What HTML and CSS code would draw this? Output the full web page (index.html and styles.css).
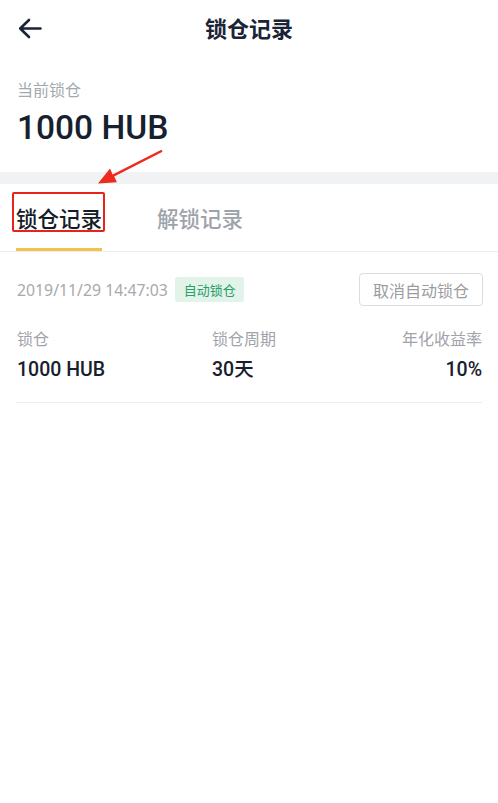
FILE: index.html
```html
<!DOCTYPE html>
<html lang="zh-CN">
<head>
<meta charset="utf-8">
<title>锁仓记录</title>
<link rel="stylesheet" href="styles.css">
</head>
<body>
<div class="page">
  <header class="header">
    <div class="back">
      <svg width="24" height="24" viewBox="0 0 24 24" class="back-icon">
        <path d="M22.5 10.5 H2.5 M11 2 L2.2 10.5 L11 19" fill="none" stroke="#1b2336" stroke-width="2.6" stroke-linecap="round" stroke-linejoin="round"/>
      </svg>
    </div>
    <h1 class="title">锁仓记录</h1>
    <div></div>
  </header>

  <section class="summary">
    <div class="summary-label">当前锁仓</div>
    <div class="summary-value">1000 HUB</div>
  </section>

  <div class="band"></div>

  <nav class="tabs">
    <div class="tab active">锁仓记录<span class="mark-box"></span></div>
    <div class="tab">解锁记录</div>
  </nav>

  <div class="record">
    <div class="record-top">
      <div class="record-meta">
        <span class="date">2019/11/29 14:47:03</span>
        <span class="tag">自动锁仓</span>
      </div>
      <button class="btn">取消自动锁仓</button>
    </div>
    <div class="record-grid">
      <div class="label">锁仓</div>
      <div class="label">锁仓周期</div>
      <div class="label right">年化收益率</div>
      <div class="value">1000 HUB</div>
      <div class="value">30天</div>
      <div class="value right">10%</div>
    </div>
  </div>

  <svg class="annot" width="498" height="200" viewBox="0 0 498 200">
    <polygon points="162.6,151.8 114.2,176.6 116.9,182.3 98,183.5 110,168.4 112.6,174.4 161.4,149.8" fill="#ee2a1c"/>
  </svg>
</div>
</body>
</html>
```

FILE: styles.css
```css
* { box-sizing: border-box; }
html, body { margin: 0; padding: 0; background: #fff; }
body {
  font-family: "Noto Sans", "Noto Sans CJK SC", sans-serif;
  color: #1b2336;
  width: 498px;
}
.page { position: relative; }

.header {
  height: 54px;
  display: grid;
  grid-template-columns: 1fr auto 1fr;
  align-items: center;
}
.back { padding-left: 18px; display: flex; align-items: center; }
.back-icon { display: block; margin-top: 5px; }
.title {
  margin: 0;
  font-size: 22px;
  line-height: 30px;
  font-weight: 700;
  font-family: "Noto Sans CJK SC", sans-serif;
  color: #1b2336;
}

.summary { padding: 24px 17px 24px; }
.summary-label {
  font-size: 16px;
  line-height: 22px;
  color: #a3a7ae;
  font-family: "Noto Sans CJK SC", sans-serif;
}
.summary-value {
  margin-top: 8px;
  font-family: Roboto, "Noto Sans", sans-serif;
  font-size: 33.5px;
  line-height: 40px;
  font-weight: 500;
  color: #17202f;
}

.band { height: 12px; background: #f1f2f4; }

.tabs {
  display: flex;
  gap: 55px;
  padding: 0 16px;
  border-bottom: 1px solid #ececec;
}
.tab {
  position: relative;
  padding-top: 3px;
  line-height: 61px;
  font-size: 21.5px;
  font-weight: 500;
  font-family: "Noto Sans CJK SC", sans-serif;
  color: #9ea3ab;
  border-bottom: 3px solid transparent;
}
.tab.active { color: #151c28; border-bottom-color: #f2c14e; }
.mark-box {
  position: absolute;
  left: -4px;
  top: 8px;
  width: 93px;
  height: 40px;
  border: 2.5px solid #e8231a;
  border-radius: 2px;
}

.record {
  margin: 0 16px;
  padding: 21px 0 19px;
  border-bottom: 1px solid #eeeeee;
}
.record-top {
  height: 33px;
  display: flex;
  align-items: center;
  justify-content: space-between;
}
.record-meta { display: flex; align-items: center; gap: 7px; padding-left: 1px; }
.date { font-size: 15.8px; color: #a7a9ae; line-height: 22px; }
.tag {
  font-family: "Noto Sans CJK SC", sans-serif;
  font-size: 13px;
  line-height: 25px;
  padding: 0 8px 0 9px;
  background: #e2f4ea;
  color: #2a9d68;
  border-radius: 2px;
}
.btn {
  height: 33px;
  padding: 0 13px;
  font-family: "Noto Sans CJK SC", sans-serif;
  font-size: 16px;
  color: #9a9ca1;
  background: #fff;
  border: 1px solid #dcdcdc;
  border-radius: 4px;
  margin-right: -1px;
}

.record-grid {
  margin-top: 21px;
  display: grid;
  grid-template-columns: 195px 1fr auto;
  row-gap: 8px;
  padding-left: 1px;
}
.label {
  font-family: "Noto Sans CJK SC", sans-serif;
  font-size: 16px;
  line-height: 22px;
  color: #a0a3a9;
}
.value {
  font-family: Roboto, "Noto Sans", "Noto Sans CJK SC", sans-serif;
  font-size: 19.5px;
  line-height: 26px;
  font-weight: 500;
  color: #17202f;
}
.right { text-align: right; }

.annot {
  position: absolute;
  left: 0;
  top: 0;
  pointer-events: none;
}
```
